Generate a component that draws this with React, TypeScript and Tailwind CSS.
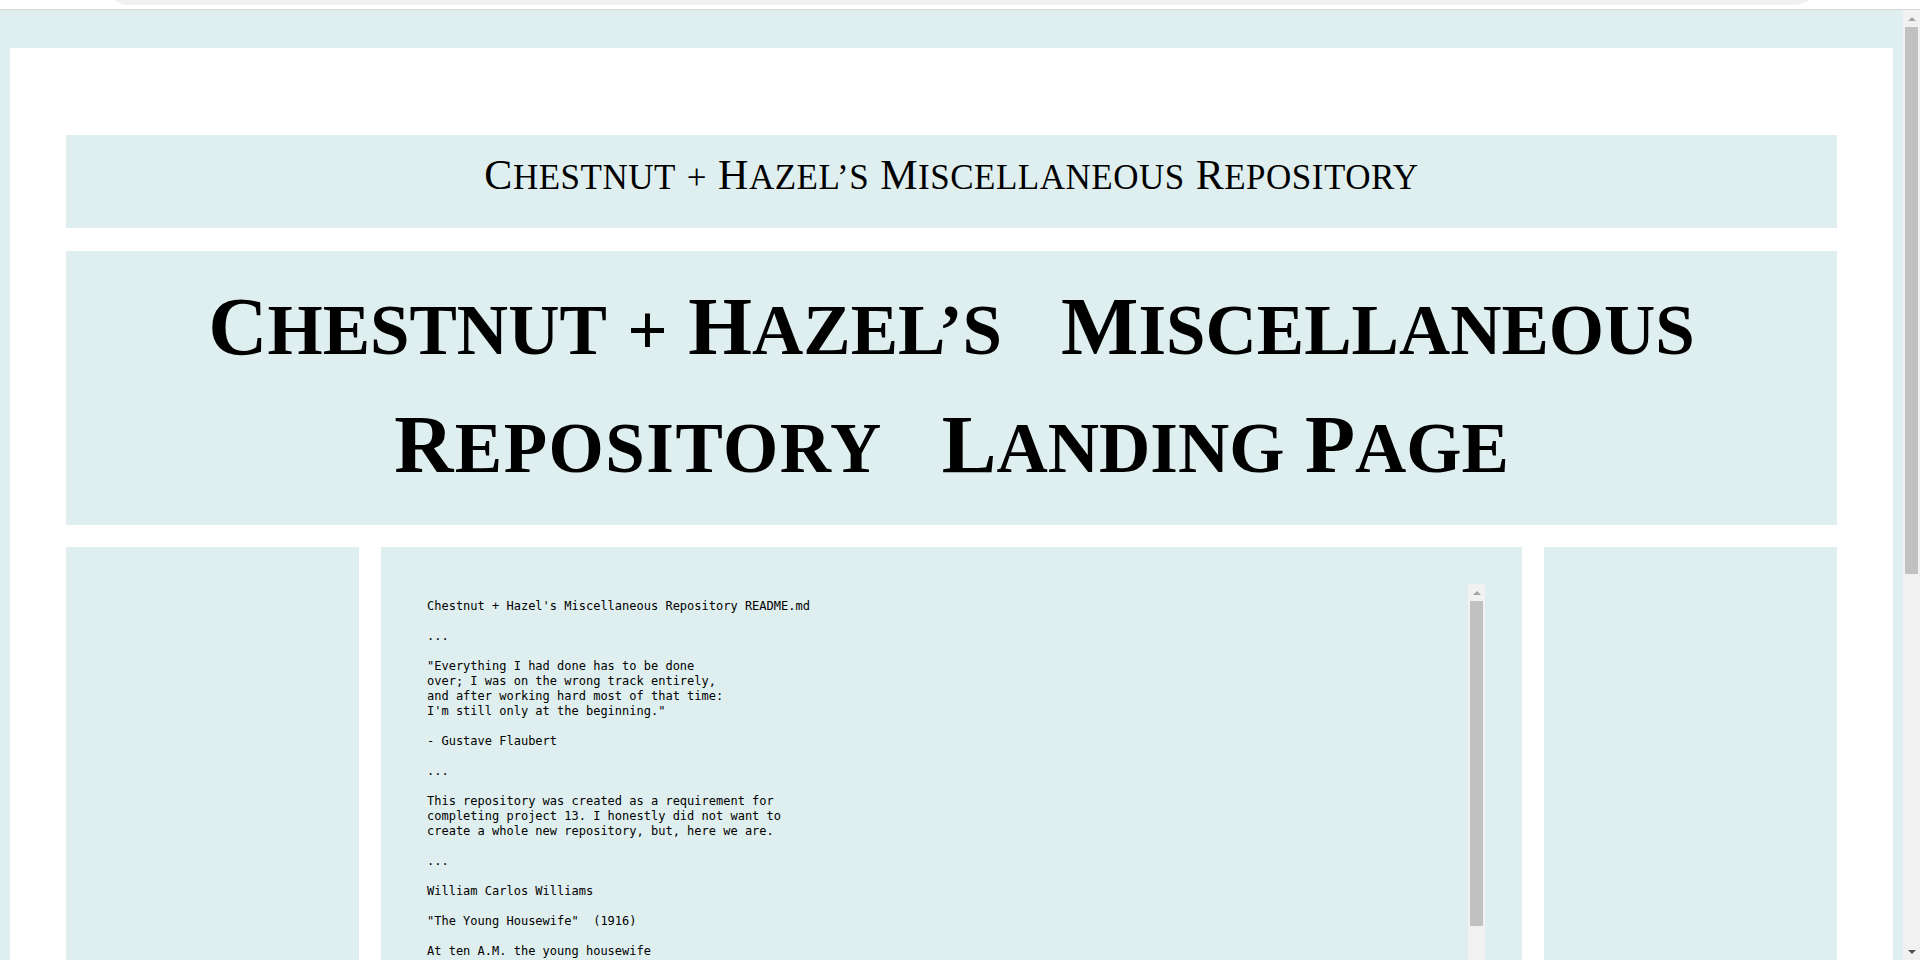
import React from 'react';

const readme = `Chestnut + Hazel's Miscellaneous Repository README.md

...

"Everything I had done has to be done
over; I was on the wrong track entirely,
and after working hard most of that time:
I'm still only at the beginning."

- Gustave Flaubert

...

This repository was created as a requirement for
completing project 13. I honestly did not want to
create a whole new repository, but, here we are.

...

William Carlos Williams

"The Young Housewife"  (1916)

At ten A.M. the young housewife
moves about in negligee behind
the wooden walls of her husband's house.
I pass solitary in my car.

Then again she comes to the curb
to call the ice-man, fish-man, and stands
shy, uncorseted, tucking in
stray ends of hair, and I compare her
to a fallen leaf.

The noiseless wheels of my car
rush with a crackling sound over
dried leaves as I bow and pass smiling.

...

Thanks for stopping by.

...`;

// first letter large, the rest as hand-made small caps
const SmallCaps: React.FC<{ word: string; big: string; small: string; extra?: string }> = ({
  word,
  big,
  small,
  extra = '',
}) => (
  <span className={extra}>
    <span className={big}>{word[0]}</span>
    <span className={small}>{word.slice(1).toUpperCase()}</span>
  </span>
);

// classic chrome-style scrollbar, scrolled to the top
const Scrollbar: React.FC<{ thumb: string; downDark?: boolean }> = ({ thumb, downDark }) => (
  <div className="w-[17px] shrink-0 flex flex-col bg-[#f1f1f1]">
    <div className="h-[17px] shrink-0 flex items-center justify-center">
      <div className="w-0 h-0 border-x-[4px] border-x-transparent border-b-[4px] border-b-[#a3a3a3]" />
    </div>
    <div className="flex-1">
      <div className={`mx-[2px] bg-[#c1c1c1] ${thumb}`} />
    </div>
    <div className="h-[17px] shrink-0 flex items-center justify-center">
      <div
        className={`w-0 h-0 border-x-[4px] border-x-transparent border-t-[4px] ${
          downDark ? 'border-t-[#505050]' : 'border-t-[#a3a3a3]'
        }`}
      />
    </div>
  </div>
);

const TopStrip: React.FC = () => (
  <div className="h-[10px] shrink-0 bg-white border-b border-[#d6d6d6]">
    <div className="ml-[113px] w-[1697px] h-[5px] bg-[#eff1f3] [clip-path:polygon(0_0,100%_0,calc(100%-12px)_100%,11px_100%)]" />
  </div>
);

export default function App() {
  const t1Big = 'text-[42px] leading-none';
  const t1Small = 'text-[35px] leading-none';
  const h1Big = 'text-[82px] leading-none';
  const h1Small = 'text-[71px] leading-none';

  return (
    <div className="h-[960px] w-full flex flex-col overflow-hidden bg-white">
      <TopStrip />
      <div className="flex-1 min-h-0 flex bg-[#dfefef]">
        <div className="flex-1 overflow-hidden">
          <div className="mx-[10px] mt-[38px] mb-[38px] bg-white px-[56px] pt-[87px] pb-[50px]">
            {/* site title */}
            <div className="bg-[#dfefef] pt-[14px] pb-[27px] text-center text-black tracking-[0.5px] font-['Liberation_Serif',serif] text-[42px] leading-[52px]">
              <SmallCaps word="Chestnut" big={t1Big} small={t1Small} />{' '}
              <span className={t1Small}>+</span>{' '}
              <SmallCaps word="Hazel’s" big={t1Big} small={t1Small} />{' '}
              <SmallCaps word="Miscellaneous" big={t1Big} small={t1Small} />{' '}
              <SmallCaps word="Repository" big={t1Big} small={t1Small} />
            </div>

            {/* page heading */}
            <div className="mt-[23px] bg-[#dfefef] pt-[17px] pb-[21px] text-center text-black font-bold font-['Liberation_Serif',serif] text-[82px] leading-[118px]">
              <div>
                <SmallCaps word="Chestnut" big={h1Big} small={h1Small} />{' '}
                <span className={h1Small}>+</span>{' '}
                <SmallCaps word="Hazel’s" big={h1Big} small={h1Small} />
                <span className="inline-block w-[59px]" />
                <SmallCaps word="Miscellaneous" big={h1Big} small={h1Small} />
              </div>
              <div>
                <SmallCaps word="Repository" big={h1Big} small={h1Small} extra="tracking-[1.5px]" />
                <span className="inline-block w-[59px]" />
                <SmallCaps word="Landing" big={h1Big} small={h1Small} />{' '}
                <SmallCaps word="Page" big={h1Big} small={h1Small} />
              </div>
            </div>

            {/* three columns */}
            <div className="mt-[22px] flex gap-[22px] h-[968px]">
              <div className="w-[293px] shrink-0 bg-[#dfefef]" />
              <div className="flex-1 bg-[#dfefef] p-[37px]">
                <div className="h-[600px] flex">
                  <div className="flex-1 overflow-hidden">
                    <div className="pl-[9px] pt-[15px] whitespace-pre font-['DejaVu_Sans_Mono',monospace] text-[12px] leading-[15px] text-black">
                      {readme}
                    </div>
                  </div>
                  <Scrollbar thumb="h-[325px]" />
                </div>
              </div>
              <div className="w-[293px] shrink-0 bg-[#dfefef]" />
            </div>
          </div>
        </div>
        <Scrollbar thumb="h-[547px]" downDark />
      </div>
    </div>
  );
}
